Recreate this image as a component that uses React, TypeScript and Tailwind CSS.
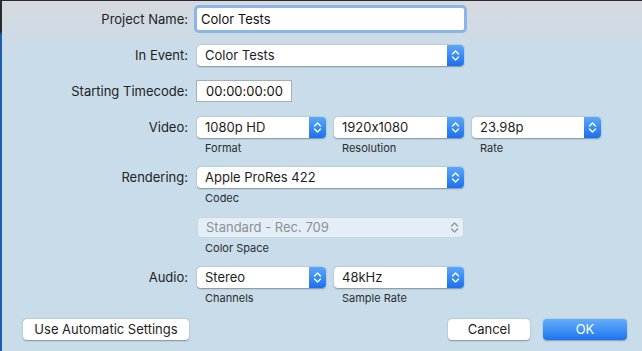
import React from "react";

const Chevrons = ({ color }: { color: string }) => (
  <svg width="9" height="13" viewBox="0 0 9 13" fill="none">
    <path d="M1.5 5 L4.5 2 L7.5 5" stroke={color} strokeWidth="1.4" strokeLinecap="round" strokeLinejoin="round" />
    <path d="M1.5 8 L4.5 11 L7.5 8" stroke={color} strokeWidth="1.4" strokeLinecap="round" strokeLinejoin="round" />
  </svg>
);

const Popup = ({ value, w, disabled }: { value: string; w: string; disabled?: boolean }) => (
  <div
    className={`${w} h-[21px] flex items-stretch rounded-[4px] ${
      disabled
        ? "bg-[#e3eef6] border border-[#c9d6e0] text-[#8c9196]"
        : "bg-white shadow-[0_0.5px_1.5px_rgba(0,0,0,0.35)] text-[#1e1e1e]"
    }`}
  >
    <div className="flex-1 flex items-center pl-[8px] text-[13px] leading-none">{value}</div>
    {disabled ? (
      <div className="w-[17px] flex items-center justify-center">
        <Chevrons color="#8e959c" />
      </div>
    ) : (
      <div className="w-[17px] flex items-center justify-center rounded-r-[4px] bg-gradient-to-b from-[#5aa6f9] to-[#1a6ff0]">
        <Chevrons color="#ffffff" />
      </div>
    )}
  </div>
);

const Label = ({ children }: { children: React.ReactNode }) => (
  <div className="w-[186px] text-right text-[13px] text-[#222] leading-none">{children}</div>
);

const Caption = ({ children, w }: { children: React.ReactNode; w: string }) => (
  <div className={`${w} pl-[8px] text-[11px] text-[#2c2c2c] leading-[14px]`}>{children}</div>
);

export default function App() {
  return (
    <div className="w-[642px] h-[351px] flex overflow-hidden font-[Inter,'Liberation_Sans',sans-serif] [font-feature-settings:'calt'_0]">
      <div className="w-[2px] h-full bg-gradient-to-b from-[#2a2a2a] via-[#2a2a2a] via-[9%] to-[#1a5cae] to-[10%]" />
      <div className="flex-1 h-full flex flex-col border-t border-[#2b2b2b] bg-gradient-to-b from-[#d6d9df] to-[#c8dcea] to-[16%] pt-[7px]">
        {/* Project Name */}
        <div className="flex items-center h-[22px]">
          <Label>Project Name:</Label>
          <div className="ml-[9px] w-[267px] h-[22px] bg-white rounded-[2px] shadow-[0_0_0_3px_rgba(110,165,235,0.7)] flex items-center pl-[4px] text-[13px] text-[#111] leading-none">
            Color Tests
          </div>
        </div>
        {/* In Event */}
        <div className="flex items-center h-[21px] mt-[15px]">
          <Label>In Event:</Label>
          <div className="ml-[9px]">
            <Popup value="Color Tests" w="w-[267px]" />
          </div>
        </div>
        {/* Timecode */}
        <div className="flex items-center h-[22px] mt-[14px]">
          <Label>Starting Timecode:</Label>
          <div className="ml-[8px] w-[96px] h-[22px] bg-white border border-[#a9aeb3] flex items-center pl-[9px] text-[13px] text-[#111] leading-none">
            00:00:00:00
          </div>
        </div>
        {/* Video */}
        <div className="flex items-center h-[21px] mt-[15px]">
          <Label>Video:</Label>
          <div className="ml-[9px] flex gap-[8px]">
            <Popup value="1080p HD" w="w-[129px]" />
            <Popup value="1920x1080" w="w-[130px]" />
            <Popup value="23.98p" w="w-[129px]" />
          </div>
        </div>
        <div className="flex mt-[3px] ml-[195px] gap-[8px]">
          <Caption w="w-[129px]">Format</Caption>
          <Caption w="w-[130px]">Resolution</Caption>
          <Caption w="w-[129px]">Rate</Caption>
        </div>
        {/* Rendering */}
        <div className="flex items-center h-[21px] mt-[12px]">
          <Label>Rendering:</Label>
          <div className="ml-[9px]">
            <Popup value="Apple ProRes 422" w="w-[267px]" />
          </div>
        </div>
        <div className="flex mt-[3px] ml-[195px]">
          <Caption w="w-[129px]">Codec</Caption>
        </div>
        {/* Color space */}
        <div className="flex items-center h-[21px] mt-[12px]">
          <div className="w-[186px]" />
          <div className="ml-[9px]">
            <Popup value="Standard - Rec. 709" w="w-[267px]" disabled />
          </div>
        </div>
        <div className="flex mt-[3px] ml-[195px]">
          <Caption w="w-[129px]">Color Space</Caption>
        </div>
        {/* Audio */}
        <div className="flex items-center h-[21px] mt-[12px]">
          <Label>Audio:</Label>
          <div className="ml-[9px] flex gap-[8px]">
            <Popup value="Stereo" w="w-[129px]" />
            <Popup value="48kHz" w="w-[130px]" />
          </div>
        </div>
        <div className="flex mt-[3px] ml-[195px] gap-[8px]">
          <Caption w="w-[129px]">Channels</Caption>
          <Caption w="w-[130px]">Sample Rate</Caption>
        </div>
        {/* Buttons */}
        <div className="flex items-center h-[21px] mt-[14px] pl-[21px] pr-[15px]">
          <div className="w-[166px] h-[21px] bg-white rounded-[4px] shadow-[0_0.5px_1.5px_rgba(0,0,0,0.35)] flex items-center justify-center text-[13px] text-[#1e1e1e] leading-none">
            Use Automatic Settings
          </div>
          <div className="flex-1" />
          <div className="w-[82px] h-[21px] bg-white rounded-[4px] shadow-[0_0.5px_1.5px_rgba(0,0,0,0.35)] flex items-center justify-center text-[13px] text-[#1e1e1e] leading-none">
            Cancel
          </div>
          <div className="ml-[13px] w-[84px] h-[21px] rounded-[4px] bg-gradient-to-b from-[#64adf9] to-[#1b73f0] shadow-[0_0.5px_1.5px_rgba(0,0,0,0.3)] flex items-center justify-center text-[13px] text-white leading-none">
            OK
          </div>
        </div>
      </div>
    </div>
  );
}
